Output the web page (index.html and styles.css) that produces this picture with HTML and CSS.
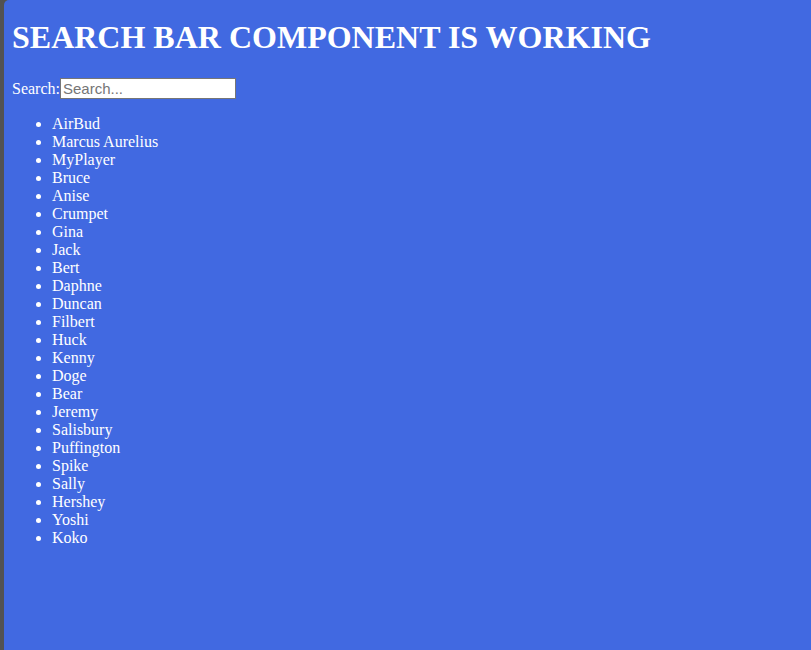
FILE: index.html
```html
<!DOCTYPE html>
<html lang="en">
<head>
<meta charset="utf-8">
<title>Search Bar</title>
<link rel="stylesheet" href="styles.css">
</head>
<body>
<div class="app">
  <h1 class="title">SEARCH BAR COMPONENT IS WORKING</h1>
  <div class="search-row"><label class="search-label" for="q">Search:</label><input id="q" class="search-input" type="text" placeholder="Search..."></div>
  <ul class="name-list">
    <li>AirBud</li>
    <li>Marcus Aurelius</li>
    <li>MyPlayer</li>
    <li>Bruce</li>
    <li>Anise</li>
    <li>Crumpet</li>
    <li>Gina</li>
    <li>Jack</li>
    <li>Bert</li>
    <li>Daphne</li>
    <li>Duncan</li>
    <li>Filbert</li>
    <li>Huck</li>
    <li>Kenny</li>
    <li>Doge</li>
    <li>Bear</li>
    <li>Jeremy</li>
    <li>Salisbury</li>
    <li>Puffington</li>
    <li>Spike</li>
    <li>Sally</li>
    <li>Hershey</li>
    <li>Yoshi</li>
    <li>Koko</li>
  </ul>
</div>
</body>
</html>
```

FILE: styles.css
```css
html {
  background: #525252;
  height: 100%;
}
body {
  margin: 0 0 0 4px;
  min-height: 100%;
  background: #4169e1;
  border-top-left-radius: 5px;
  font-family: "Liberation Serif", "Times New Roman", serif;
  font-size: 16px;
  color: #ffffff;
  overflow: hidden;
}
.app {
  display: flow-root;
  padding: 0 8px;
}
.title {
  font-size: 32px;
  font-weight: bold;
  margin: 19px 0 22px;
}
.search-row {
  line-height: 18px;
}
.search-label {
  color: #ffffff;
}
.search-input {
  box-sizing: border-box;
  font-family: "Liberation Sans", Arial, sans-serif;
  font-size: 15px;
  width: 176px;
  height: 21px;
  padding: 1px 2px;
  border: 1px solid #767676;
  background: #ffffff;
  color: #000;
  vertical-align: baseline;
}
.search-input::placeholder {
  color: #757575;
}
.name-list {
  margin: 16px 0;
  padding-left: 40px;
  line-height: 18px;
}
```
